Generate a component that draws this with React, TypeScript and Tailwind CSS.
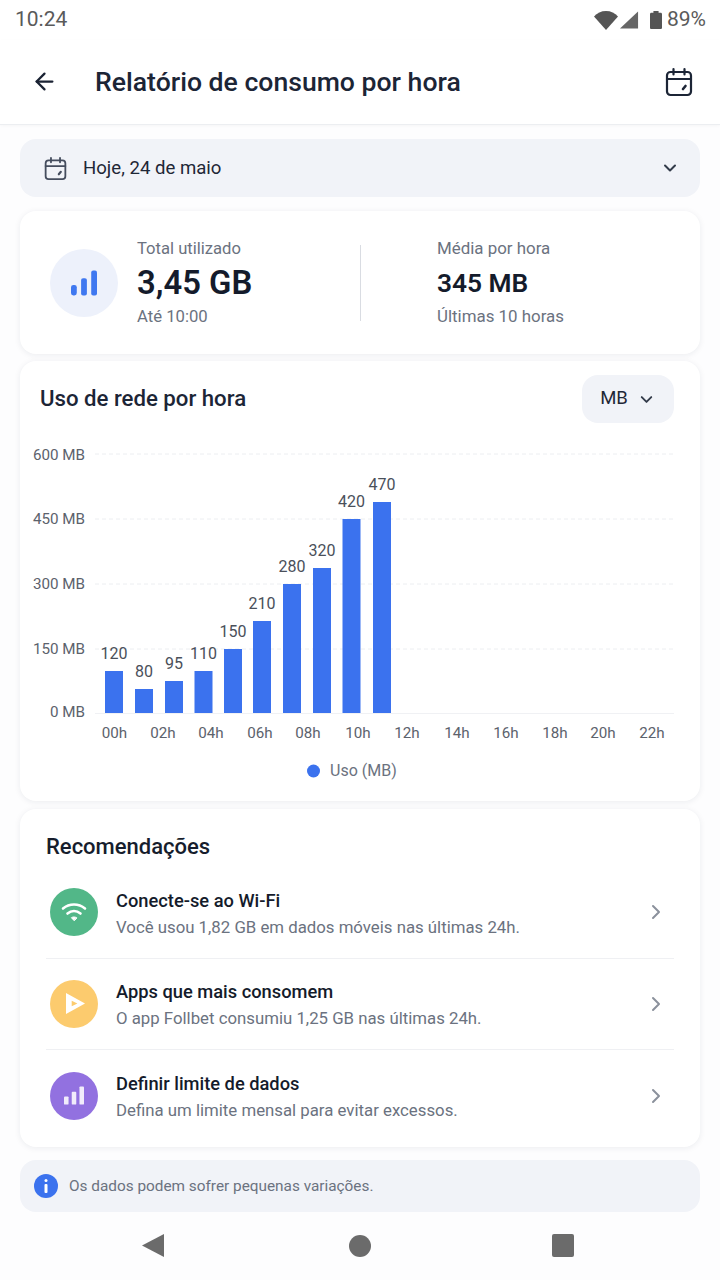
import { ArrowLeft, ChevronDown, ChevronRight } from 'lucide-react';

const yTicks = [
  { label: '600 MB', y: 454, textY: 459.5 },
  { label: '450 MB', y: 519, textY: 523.5 },
  { label: '300 MB', y: 584, textY: 588.5 },
  { label: '150 MB', y: 649, textY: 653.5 },
];

const bars = [
  { v: 120, x: 114, top: 671 },
  { v: 80, x: 144, top: 689 },
  { v: 95, x: 174, top: 681 },
  { v: 110, x: 203.5, top: 671 },
  { v: 150, x: 233, top: 649 },
  { v: 210, x: 262, top: 621 },
  { v: 280, x: 292, top: 584 },
  { v: 320, x: 322, top: 568 },
  { v: 420, x: 351.5, top: 519 },
  { v: 470, x: 382, top: 502 },
];

const hours = ['00h', '02h', '04h', '06h', '08h', '10h', '12h', '14h', '16h', '18h', '20h', '22h'];
const hourX = [114.5, 163, 211, 260, 308, 358, 407, 457, 506, 555, 603, 652];

function CalendarIcon({ className }: { className: string }) {
  return (
    <svg viewBox="0 0 28 30" fill="none" stroke="currentColor" strokeWidth="2.2" strokeLinecap="round" strokeLinejoin="round" className={className}>
      <rect x="2" y="5" width="24" height="23" rx="3.5" />
      <path d="M2 12h24M8.5 2v5.5M19.5 2v5.5" />
      <path d="M18 22l2.5-3" strokeWidth="2.6" />
    </svg>
  );
}

function UsageChart() {
  const originY = 361;
  return (
    <svg viewBox={`0 ${originY + 80} 680 345`} className="block w-[680px] h-[345px]">
      <g transform="translate(-20 0)">
        {yTicks.map(t => (
          <g key={t.label}>
            <line x1="95" x2="674" y1={t.y} y2={t.y} stroke="#eceef1" strokeDasharray="4 3" />
            <text x="85" y={t.textY} textAnchor="end" fontSize="15.2" fill="#5c626c">{t.label}</text>
          </g>
        ))}
        <line x1="95" x2="674" y1="713.5" y2="713.5" stroke="#f0f1f4" />
        <text x="85" y="716.5" textAnchor="end" fontSize="15.2" fill="#5c626c">0 MB</text>
        {bars.map(b => (
          <g key={b.v}>
            <rect x={b.x - 9} y={b.top} width="18" height={713 - b.top} fill="#3b72ee" />
            <text x={b.x} y={b.top - 12} textAnchor="middle" fontSize="16" fill="#4a505a">{b.v}</text>
          </g>
        ))}
        {hours.map((h, i) => (
          <text key={h} x={hourX[i]} y="738" textAnchor="middle" fontSize="15.2" fill="#5c626c">{h}</text>
        ))}
        <circle cx="313.5" cy="771" r="6.5" fill="#3b72ee" />
        <text x="330" y="776" fontSize="16" fill="#6b7280">Uso (MB)</text>
      </g>
    </svg>
  );
}

const recs = [
  {
    title: 'Conecte-se ao Wi-Fi',
    sub: 'Você usou 1,82 GB em dados móveis nas últimas 24h.',
    bg: 'bg-[#52b788]',
    icon: (
      <svg viewBox="0 0 26 22" fill="none" stroke="white" strokeWidth="2.6" strokeLinecap="round" className="w-[26px] h-[22px]">
        <path d="M2 7.5c6.4-5.4 15.6-5.4 22 0" />
        <path d="M6.5 12.5c3.9-3.2 9.1-3.2 13 0" />
        <path d="M13 19.5l-2.6-2.8c1.5-1 3.7-1 5.2 0z" fill="white" strokeWidth="1" strokeLinejoin="round" />
      </svg>
    ),
  },
  {
    title: 'Apps que mais consomem',
    sub: 'O app Follbet consumiu 1,25 GB nas últimas 24h.',
    bg: 'bg-[#fccb6e]',
    icon: (
      <svg viewBox="0 0 20 22" className="w-[19px] h-[21px] ml-0.5">
        <path fillRule="evenodd" d="M0 0l20 11L0 22zM6 8v6l6-3z" fill="white" />
      </svg>
    ),
  },
  {
    title: 'Definir limite de dados',
    sub: 'Defina um limite mensal para evitar excessos.',
    bg: 'bg-[#9271e0]',
    icon: (
      <svg viewBox="0 0 22 20" fill="#f1ecfb" className="w-5 h-[19px]">
        <rect x="0" y="11" width="5" height="9" rx="1" />
        <rect x="8.5" y="6" width="5" height="14" rx="1" />
        <rect x="17" y="0" width="5" height="20" rx="1" />
      </svg>
    ),
  },
];

export default function App() {
  return (
    <div className="w-[720px] h-[1280px] overflow-hidden bg-[#fdfdfe] font-['Roboto',sans-serif] text-[#1a2233]">
      <div className="h-10 flex items-center justify-between pl-[15px] pr-[14px] bg-white text-[#5a5a5a]">
        <span className="text-[21px]">10:24</span>
        <div className="flex items-center">
          <svg viewBox="0 0 24 20" className="w-6 h-5 fill-[#555]"><path d="M0 6.5C3 3 7.2 1 12 1s9 2 12 5.5L12 20z" /></svg>
          <svg viewBox="0 0 20 20" className="ml-[2px] w-[19px] h-5 fill-[#666]"><path d="M0 19L19 1v18z" /></svg>
          <svg viewBox="0 0 14 21" className="w-3 h-5 ml-[11px] fill-[#555]"><path d="M4 0h6v2h2.5c.8 0 1.5.7 1.5 1.5V19.5c0 .8-.7 1.5-1.5 1.5h-11C.7 21 0 20.3 0 19.5V3.5C0 2.7.7 2 1.5 2H4z" /></svg>
          <span className="text-[21px] ml-[5px]">89%</span>
        </div>
      </div>

      <header className="h-[85px] bg-white flex items-center justify-between pl-[31px] pr-[27px] border-b border-[#eceef1] shadow-[0_1px_3px_rgba(0,0,0,0.03)]">
        <div className="flex items-center">
          <ArrowLeft className="w-[27px] h-[27px] text-[#1a2233]" strokeWidth={2} />
          <h1 className="ml-[37px] text-[26.6px] font-medium text-[#1c2536]">Relatório de consumo por hora</h1>
        </div>
        <CalendarIcon className="w-7 h-[30px] text-[#1c2536]" />
      </header>

      <div className="px-5 pt-[14px]">
        <div className="h-[58px] rounded-2xl bg-[#f1f3f8] flex items-center justify-between pl-6 pr-[20px]">
          <div className="flex items-center">
            <CalendarIcon className="w-[23px] h-[25px] text-[#454d5e]" />
            <span className="ml-4 text-[18.6px] leading-[24px] -mt-px text-[#1f2736]">Hoje, 24 de maio</span>
          </div>
          <ChevronDown className="w-5 h-5 text-[#333b4a]" strokeWidth={2.4} />
        </div>

        <section className="mt-[14px] h-[143px] rounded-2xl bg-white shadow-[0_1px_6px_rgba(30,40,70,0.08)] flex items-center pl-[30px]">
          <div className="w-[68px] h-[68px] rounded-full bg-[#edf1fb] flex items-center justify-center">
            <svg viewBox="0 0 27 26" fill="#3f78f0" className="w-[26px] h-[26px]">
              <rect x="0" y="15" width="6" height="11" rx="2.5" />
              <rect x="10.5" y="8" width="6" height="18" rx="2" />
              <rect x="21" y="0" width="6" height="26" rx="2" />
            </svg>
          </div>
          <div className="ml-[19px] w-[223px] flex flex-col">
            <span className="text-[16.6px] leading-[20px] text-[#6b7280]">Total utilizado</span>
            <span className="mt-[5px] text-[32.8px] leading-[38px] font-semibold text-[#141b2b]">3,45 GB</span>
            <span className="mt-[5px] text-[16.7px] leading-[20px] text-[#6b7280]">Até 10:00</span>
          </div>
          <div className="w-px h-[76px] bg-[#d9dce2]" />
          <div className="ml-[76px] flex flex-col -mt-[2px]">
            <span className="text-[16.9px] leading-[20px] text-[#6b7280]">Média por hora</span>
            <span className="mt-[8px] text-[26.3px] leading-[34px] font-semibold text-[#141b2b]">345 MB</span>
            <span className="mt-[6px] text-[16.9px] leading-[20px] text-[#6b7280]">Últimas 10 horas</span>
          </div>
        </section>

        <section className="mt-[7px] h-[440px] rounded-2xl bg-white shadow-[0_1px_6px_rgba(30,40,70,0.08)]">
          <div className="flex items-center justify-between pl-5 pr-[26px] pt-[14px]">
            <h2 className="text-[22.2px] font-medium text-[#1c2536]">Uso de rede por hora</h2>
            <div className="w-[92px] h-[48px] rounded-2xl bg-[#f1f3f8] flex items-center justify-center gap-[9px]">
              <span className="text-[18.5px] text-[#1f2736]">MB</span>
              <ChevronDown className="w-[19px] h-[19px] text-[#333b4a]" strokeWidth={2.4} />
            </div>
          </div>
          <div className="mt-[18px]">
            <UsageChart />
          </div>
        </section>

        <section className="mt-2 h-[338px] rounded-2xl bg-white shadow-[0_1px_6px_rgba(30,40,70,0.08)] px-[26px] pt-[24px]">
          <h2 className="text-[22px] leading-[28px] font-medium text-[#161d2d]">Recomendações</h2>
          <div className="mt-[6px]">
            {recs.map((r, i) => (
              <div key={r.title} className={`h-[91.5px] flex items-center ${i < recs.length - 1 ? 'border-b border-[#eff0f3]' : ''}`}>
                <div className={`ml-1 w-12 h-12 rounded-full flex items-center justify-center shrink-0 ${r.bg}`}>{r.icon}</div>
                <div className="ml-[18px] flex-1 pt-[3px]">
                  <div className="text-[18.3px] leading-[24px] font-medium text-[#141b2b]">{r.title}</div>
                  <div className="mt-[2px] text-[16.8px] leading-[24px] text-[#6b7280]">{r.sub}</div>
                </div>
                <ChevronRight className="w-[24px] h-[24px] mr-[6px] text-[#8b919c]" strokeWidth={2} />
              </div>
            ))}
          </div>
        </section>

        <div className="mt-[13px] h-[52px] rounded-2xl bg-[#f1f3f8] flex items-center pl-[14px]">
          <div className="w-6 h-6 rounded-full bg-[#3b72ee] flex items-center justify-center">
            <svg viewBox="0 0 4 14" fill="white" className="w-1 h-[14px]">
              <rect x="0.5" y="0" width="3" height="3" rx="1.5" />
              <rect x="0.5" y="5" width="3" height="9" rx="1" />
            </svg>
          </div>
          <span className="ml-[11px] mt-px text-[15.35px] text-[#6b7280]">Os dados podem sofrer pequenas variações.</span>
        </div>
      </div>

      <nav className="mt-[22px] pl-[142px] flex items-center">
        <svg viewBox="0 0 22 23" className="w-[22px] h-[23px] fill-[#6b6b6b]"><path d="M22 0v23L0 11.5z" /></svg>
        <div className="ml-[185px] w-[22px] h-[22px] rounded-full bg-[#6b6b6b]" />
        <div className="ml-[181px] w-[22px] h-[23px] rounded-[2px] bg-[#6b6b6b]" />
      </nav>
    </div>
  );
}
